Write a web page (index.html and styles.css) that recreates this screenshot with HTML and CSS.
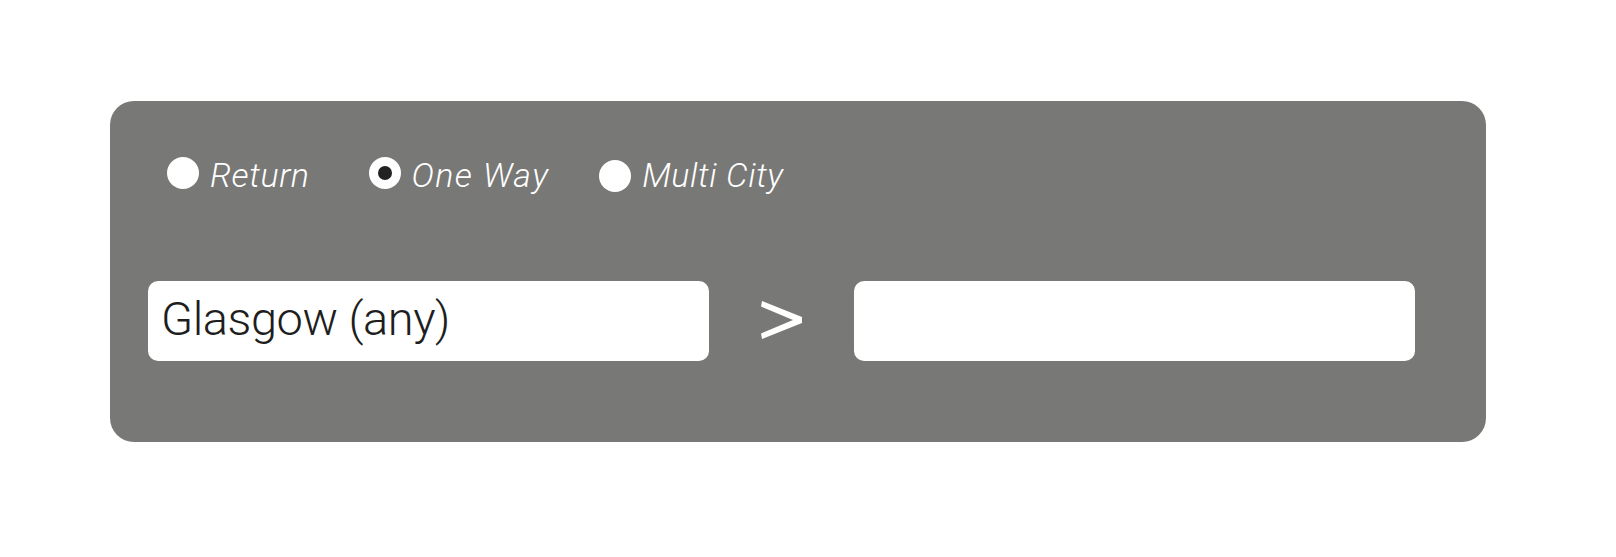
FILE: index.html
```html
<!DOCTYPE html>
<html lang="en">
<head>
<meta charset="utf-8">
<title>Flight search</title>
<link rel="stylesheet" href="styles.css">
</head>
<body>
<div class="panel">
  <div class="trip-types">
    <label class="trip trip-return"><span class="radio"></span><span class="trip-label">Return</span></label>
    <label class="trip trip-oneway"><span class="radio radio-checked"><span class="dot"></span></span><span class="trip-label">One Way</span></label>
    <label class="trip trip-multi"><span class="radio"></span><span class="trip-label">Multi City</span></label>
  </div>
  <div class="route">
    <div class="field"><span class="field-text">Glasgow (any)</span></div>
    <svg class="arrow" width="41" height="38" viewBox="0 0 41 38" aria-hidden="true">
      <polygon points="1,0 41,16 41,22 1,38 0,32.5 32,19 0,5.5" fill="#ffffff"/>
    </svg>
    <div class="field"></div>
  </div>
</div>
</body>
</html>
```
FILE: styles.css
```css
html, body {
  margin: 0;
  padding: 0;
  background: #ffffff;
}

body {
  width: 1616px;
  height: 557px;
  overflow: hidden;
  font-family: Roboto, "Liberation Sans", sans-serif;
}

.panel {
  margin: 101px 0 0 110px;
  width: 1376px;
  height: 341px;
  box-sizing: border-box;
  background: #787876;
  border-radius: 24px;
  padding: 0 0 0 38px;
}

.trip-types {
  display: flex;
  align-items: center;
  padding: 56px 0 0 19px;
  height: 32px;
}

.trip {
  display: flex;
  align-items: center;
}

.trip-return { margin-right: 59px; }
.trip-oneway { margin-right: 50px; }
.trip-oneway .trip-label { letter-spacing: 1.4px; }
.trip-multi .radio { position: relative; top: 3px; }

.radio {
  width: 32px;
  height: 32px;
  border-radius: 50%;
  background: #ffffff;
  display: flex;
  align-items: center;
  justify-content: center;
  flex: none;
}

.dot {
  width: 14px;
  height: 14px;
  border-radius: 50%;
  background: #222222;
}

.trip-label {
  margin-left: 11px;
  color: #ffffff;
  font-style: italic;
  font-weight: 300;
  font-size: 34px;
  letter-spacing: 0.6px;
  line-height: 32px;
  position: relative;
  top: 2px;
}

.route {
  display: flex;
  align-items: center;
  margin-top: 92px;
}

.field {
  width: 561px;
  height: 80px;
  background: #ffffff;
  border-radius: 10px;
  display: flex;
  align-items: center;
  box-sizing: border-box;
  padding-left: 13px;
}

.field-text {
  font-size: 47px;
  font-weight: 300;
  color: #1e1e1e;
  letter-spacing: -0.45px;
  line-height: 1;
  position: relative;
  top: -3px;
}

.arrow {
  margin: 0 52px;
  position: relative;
  top: -1px;
  flex: none;
}
```
